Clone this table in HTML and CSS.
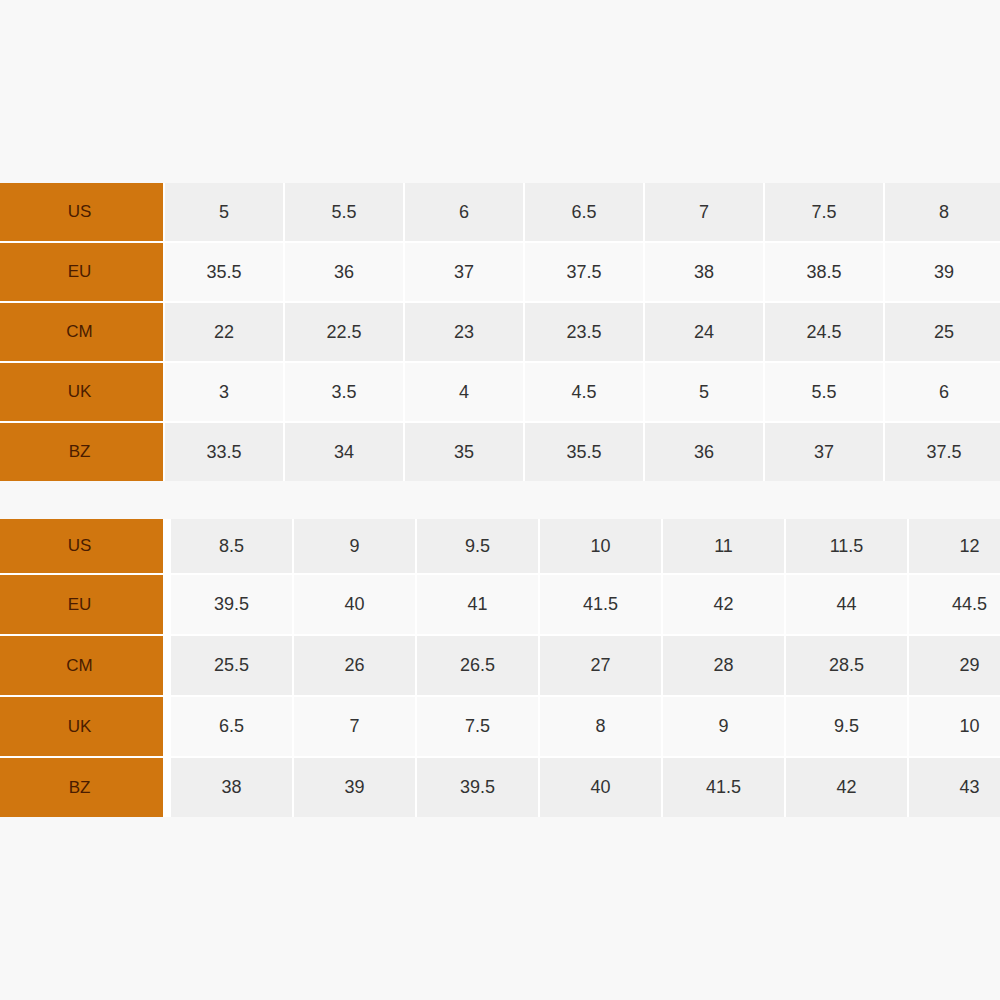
FILE: index.html
```html
<!DOCTYPE html>
<html>
<head>
<meta charset="utf-8">
<link rel="stylesheet" href="styles.css">
</head>
<body>
<div class="page">
  <div class="chart chart-a">
    <div class="label">US</div><div class="c">5</div><div class="c">5.5</div><div class="c">6</div><div class="c">6.5</div><div class="c">7</div><div class="c">7.5</div><div class="c">8</div>
    <div class="label">EU</div><div class="c alt">35.5</div><div class="c alt">36</div><div class="c alt">37</div><div class="c alt">37.5</div><div class="c alt">38</div><div class="c alt">38.5</div><div class="c alt">39</div>
    <div class="label">CM</div><div class="c">22</div><div class="c">22.5</div><div class="c">23</div><div class="c">23.5</div><div class="c">24</div><div class="c">24.5</div><div class="c">25</div>
    <div class="label">UK</div><div class="c alt">3</div><div class="c alt">3.5</div><div class="c alt">4</div><div class="c alt">4.5</div><div class="c alt">5</div><div class="c alt">5.5</div><div class="c alt">6</div>
    <div class="label">BZ</div><div class="c">33.5</div><div class="c">34</div><div class="c">35</div><div class="c">35.5</div><div class="c">36</div><div class="c">37</div><div class="c">37.5</div>
  </div>
  <div class="chart chart-b">
    <div class="label">US</div><div class="c">8.5</div><div class="c">9</div><div class="c">9.5</div><div class="c">10</div><div class="c">11</div><div class="c">11.5</div><div class="c">12</div>
    <div class="label">EU</div><div class="c alt">39.5</div><div class="c alt">40</div><div class="c alt">41</div><div class="c alt">41.5</div><div class="c alt">42</div><div class="c alt">44</div><div class="c alt">44.5</div>
    <div class="label">CM</div><div class="c">25.5</div><div class="c">26</div><div class="c">26.5</div><div class="c">27</div><div class="c">28</div><div class="c">28.5</div><div class="c">29</div>
    <div class="label">UK</div><div class="c alt">6.5</div><div class="c alt">7</div><div class="c alt">7.5</div><div class="c alt">8</div><div class="c alt">9</div><div class="c alt">9.5</div><div class="c alt">10</div>
    <div class="label">BZ</div><div class="c">38</div><div class="c">39</div><div class="c">39.5</div><div class="c">40</div><div class="c">41.5</div><div class="c">42</div><div class="c">43</div>
  </div>
</div>
</body>
</html>
```
FILE: styles.css
```css
html, body {
  margin: 0;
  padding: 0;
  background: #f8f8f8;
}
body {
  width: 1000px;
  height: 1000px;
  overflow: hidden;
  font-family: "Liberation Sans", Arial, sans-serif;
}
.page {
  padding-top: 183px;
  width: 1000px;
  overflow: hidden;
}
.chart {
  display: grid;
  background: #ffffff;
  width: 1010px;
}
.chart-a {
  grid-template-columns: 163px repeat(7, 118px);
  grid-template-rows: repeat(5, 58px);
  gap: 2px;
}
.chart-a + .chart-b {
  margin-top: 38px;
}
.chart-b {
  grid-template-columns: 169px repeat(7, 121px);
  grid-template-rows: 54px repeat(4, 59px);
  gap: 2px;
}
.label {
  background: #d0760f;
  color: #4a1c00;
  font-size: 17px;
  display: flex;
  align-items: center;
  justify-content: center;
  padding-right: 4px;
}
.chart-b .label {
  background: linear-gradient(to right, #d0760f 163px, #ffffff 163px);
  padding-right: 10px;
}
.c {
  background: #efefef;
  color: #333333;
  font-size: 18px;
  display: flex;
  align-items: center;
  justify-content: center;
}
.c.alt {
  background: #f9f9f9;
}
```
